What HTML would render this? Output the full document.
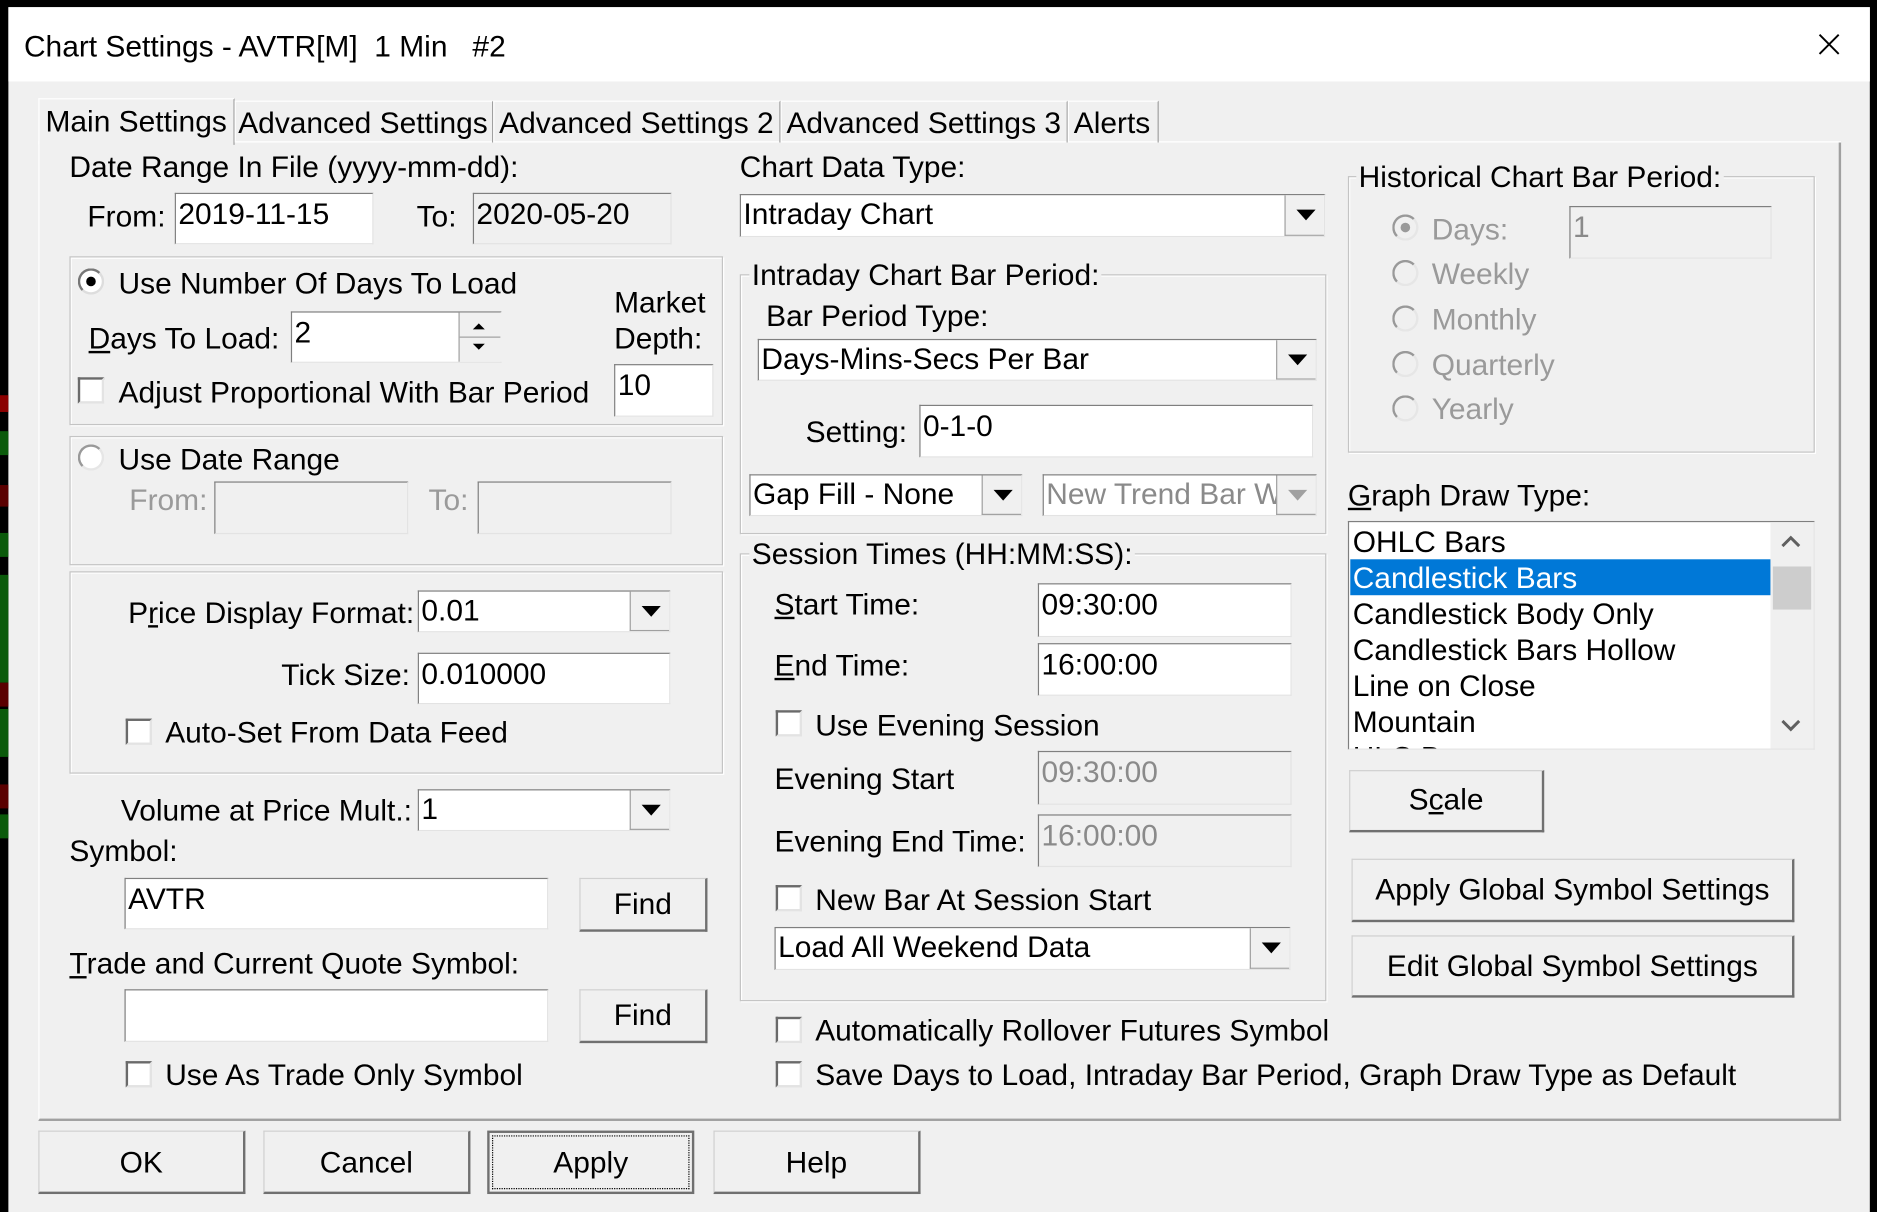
<!DOCTYPE html>
<html><head><meta charset="utf-8"><style>
html,body{margin:0;padding:0;background:#000;overflow:hidden;width:1877px;height:1212px}
#r{position:absolute;left:0;top:0;width:1568px;height:1012px;transform-origin:0 0;transform:scale(1.19707,1.19763);background:#000;font-family:"Liberation Sans",sans-serif;font-size:25px;color:#000}
#win{position:absolute;left:7px;top:6px;width:1555px;height:1006px;background:#f0f0f0}
#tb{position:absolute;left:7px;top:6px;width:1555px;height:62px;background:#fff}
.a{position:absolute;white-space:nowrap;line-height:30px;height:30px;margin-top:1px}
.g{color:#9a9a9a}
.in{position:absolute;background:#fff;box-sizing:border-box;border:1px solid;border-color:#7f7f7f #e3e3e3 #e3e3e3 #7f7f7f;padding-left:2px;line-height:34px;white-space:nowrap;overflow:hidden}
.dis{background:#f0f0f0;color:#8a8a8a}
.cb{position:absolute;background:#fff;box-sizing:border-box;border:1px solid;border-color:#7f7f7f #e3e3e3 #e3e3e3 #7f7f7f;padding-left:2px;line-height:33px;white-space:nowrap;overflow:hidden}
.cb .bt{position:absolute;right:0;top:0;bottom:0;width:33px;background:#f0f0f0;border-left:1px solid #a0a0a0;border-bottom:1px solid #a0a0a0;box-sizing:border-box}
.cb .bt:after{content:"";position:absolute;left:9px;top:12px;border-left:8px solid transparent;border-right:8px solid transparent;border-top:9px solid #000}
.cb.dis .bt:after{border-top-color:#a0a0a0}
.grp{position:absolute;box-sizing:border-box;border:1px solid #c4c4c4;box-shadow:1px 1px 0 #fff inset,1px 1px 0 #fff}
.gl{position:absolute;background:#f0f0f0;padding:0 2px;line-height:30px;height:30px;white-space:nowrap;margin-top:1px}
.chk{position:absolute;width:22px;height:22px;box-sizing:border-box;background:#fff;border:2px solid;border-color:#6a6a6a #e3e3e3 #e3e3e3 #6a6a6a}
.rad{position:absolute;width:22px;height:22px;border-radius:50%;box-sizing:border-box;background:#fff;border:2px solid;border-color:#777 #ddd #ddd #777}
.rad.on:after{content:"";position:absolute;left:5px;top:5px;width:8px;height:8px;border-radius:50%;background:#000}
.rad.gon:after{content:"";position:absolute;left:5px;top:5px;width:8px;height:8px;border-radius:50%;background:#9a9a9a}
.rad.gr{background:#f0f0f0;border-color:#999 #e6e6e6 #e6e6e6 #999}
.btn{position:absolute;box-sizing:border-box;background:#f0f0f0;border:1px solid #d0d0d0;border-right:2px solid #707070;border-bottom:2px solid #707070;text-align:center;white-space:nowrap}
u{text-decoration:underline}
</style></head><body><div id="r">
<div id="win"></div>
<div id="tb"></div>
<div style="position:absolute;left:0;top:330px;width:7px;height:14px;background:#8b0000"></div>
<div style="position:absolute;left:0;top:360px;width:7px;height:20px;background:#0a5a0a"></div>
<div style="position:absolute;left:0;top:405px;width:7px;height:18px;background:#5a0000"></div>
<div style="position:absolute;left:0;top:445px;width:7px;height:20px;background:#0a5a0a"></div>
<div style="position:absolute;left:0;top:480px;width:7px;height:90px;background:#0a5a0a"></div>
<div style="position:absolute;left:0;top:570px;width:7px;height:20px;background:#5a0000"></div>
<div style="position:absolute;left:0;top:592px;width:7px;height:40px;background:#0a5a0a"></div>
<div style="position:absolute;left:0;top:655px;width:7px;height:20px;background:#5a0000"></div>
<div style="position:absolute;left:0;top:680px;width:7px;height:20px;background:#0a5a0a"></div>
<div class="a" style="left:20px;top:23px">Chart Settings - AVTR[M]&nbsp; 1 Min&nbsp;&nbsp; #2</div>
<svg style="position:absolute;left:1519px;top:28px" width="18" height="18"><path d="M1 1L17 17M17 1L1 17" stroke="#000" stroke-width="1.6"/></svg>

<div style="position:absolute;left:32px;top:118px;width:1506px;height:818px;box-sizing:border-box;border:1px solid #a0a0a0;border-top-color:#fff;border-left-color:#fff;border-right:2px solid #a0a0a0;border-bottom:2px solid #a0a0a0"></div>
<div style="position:absolute;left:32px;top:118px;width:1506px;height:1px;background:#fff"></div>
<div style="position:absolute;left:32px;top:82px;width:162px;height:38px;background:#f0f0f0;border-left:1px solid #fff;border-top:1px solid #fff;border-right:1px solid #a0a0a0"></div>
<div class="a" style="left:38px;top:86px">Main Settings</div>
<div style="position:absolute;left:196px;top:84px;width:214px;height:34px;border-left:1px solid #fff;border-top:1px solid #fff;border-right:1px solid #a0a0a0"></div>
<div class="a" style="left:199px;top:87px">Advanced Settings</div>
<div style="position:absolute;left:412px;top:84px;width:238px;height:34px;border-left:1px solid #fff;border-top:1px solid #fff;border-right:1px solid #a0a0a0"></div>
<div class="a" style="left:417px;top:87px">Advanced Settings 2</div>
<div style="position:absolute;left:652px;top:84px;width:238px;height:34px;border-left:1px solid #fff;border-top:1px solid #fff;border-right:1px solid #a0a0a0"></div>
<div class="a" style="left:657px;top:87px">Advanced Settings 3</div>
<div style="position:absolute;left:892px;top:84px;width:74px;height:34px;border-left:1px solid #fff;border-top:1px solid #fff;border-right:1px solid #a0a0a0"></div>
<div class="a" style="left:897px;top:87px">Alerts</div>

<div class="a" style="left:58px;top:124px">Date Range In File (yyyy-mm-dd):</div>
<div class="a" style="left:73px;top:165px">From:</div>
<div class="in" style="left:146px;top:161px;width:166px;height:43px">2019-11-15</div>
<div class="a" style="left:348px;top:165px">To:</div>
<div class="in dis" style="left:395px;top:161px;width:166px;height:43px;color:#000">2020-05-20</div>

<div class="grp" style="left:58px;top:214px;width:546px;height:141px"></div>
<div class="rad on" style="left:65px;top:224px"></div>
<div class="a" style="left:99px;top:221px">Use Number Of Days To Load</div>
<div class="a" style="left:74px;top:267px"><u>D</u>ays To Load:</div>
<div class="in" style="left:243px;top:260px;width:176px;height:43px">2</div>
<div style="position:absolute;left:383px;top:261px;width:35px;height:41px;background:#f0f0f0;border-left:1px solid #a0a0a0"></div>
<div style="position:absolute;left:384px;top:281px;width:34px;height:1px;background:#a0a0a0"></div>
<svg style="position:absolute;left:393px;top:266px" width="14" height="30"><path d="M2 9L7 4L12 9Z M2 21L7 26L12 21Z" fill="#000"/></svg>
<div class="a" style="left:513px;top:237px">Market</div>
<div class="a" style="left:513px;top:267px">Depth:</div>
<div class="in" style="left:513px;top:304px;width:83px;height:44px">10</div>
<div class="chk" style="left:65px;top:315px"></div>
<div class="a" style="left:99px;top:312px">Adjust Proportional With Bar Period</div>

<div class="grp" style="left:58px;top:364px;width:546px;height:108px"></div>
<div class="rad gr" style="left:65px;top:371px;background:#fff"></div>
<div class="a" style="left:99px;top:368px">Use Date Range</div>
<div class="a g" style="left:108px;top:402px">From:</div>
<div class="in dis" style="left:179px;top:402px;width:162px;height:44px"></div>
<div class="a g" style="left:358px;top:402px">To:</div>
<div class="in dis" style="left:399px;top:402px;width:162px;height:44px"></div>

<div class="grp" style="left:58px;top:477px;width:546px;height:169px"></div>
<div class="a" style="left:107px;top:496px">P<u>r</u>ice Display Format:</div>
<div class="cb" style="left:349px;top:493px;width:211px;height:35px">0.01<div class="bt"></div></div>
<div class="a" style="left:235px;top:548px">Tick Size:</div>
<div class="in" style="left:349px;top:545px;width:211px;height:43px">0.010000</div>
<div class="chk" style="left:105px;top:600px"></div>
<div class="a" style="left:138px;top:596px">Auto-Set From Data Feed</div>

<div class="a" style="left:101px;top:661px">Volume at Price Mult.:</div>
<div class="cb" style="left:349px;top:659px;width:211px;height:35px">1<div class="bt"></div></div>
<div class="a" style="left:58px;top:695px">Symbol:</div>
<div class="in" style="left:104px;top:733px;width:354px;height:43px">AVTR</div>
<div class="btn" style="left:484px;top:733px;width:107px;height:45px;line-height:42px">Find</div>
<div class="a" style="left:58px;top:789px"><u>T</u>rade and Current Quote Symbol:</div>
<div class="in" style="left:104px;top:826px;width:354px;height:44px"></div>
<div class="btn" style="left:484px;top:826px;width:107px;height:45px;line-height:42px">Find</div>
<div class="chk" style="left:105px;top:886px"></div>
<div class="a" style="left:138px;top:882px">Use As Trade Only Symbol</div>

<div class="a" style="left:618px;top:124px">Chart Data Type:</div>
<div class="cb" style="left:618px;top:162px;width:489px;height:36px">Intraday Chart<div class="bt"></div></div>
<div class="grp" style="left:618px;top:229px;width:490px;height:217px"></div>
<div class="gl" style="left:626px;top:214px">Intraday Chart Bar Period:</div>
<div class="a" style="left:640px;top:248px">Bar Period Type:</div>
<div class="cb" style="left:633px;top:283px;width:467px;height:35px">Days-Mins-Secs Per Bar<div class="bt"></div></div>
<div class="a" style="left:673px;top:345px">Setting:</div>
<div class="in" style="left:768px;top:338px;width:329px;height:44px">0-1-0</div>
<div class="cb" style="left:626px;top:396px;width:228px;height:35px">Gap Fill - None<div class="bt"></div></div>
<div class="cb dis" style="left:871px;top:396px;width:229px;height:35px;color:#8a8a8a">New Trend Bar W<div class="bt"></div></div>

<div class="grp" style="left:618px;top:462px;width:490px;height:374px"></div>
<div class="gl" style="left:626px;top:447px">Session Times (HH:MM:SS):</div>
<div class="a" style="left:647px;top:489px"><u>S</u>tart Time:</div>
<div class="in" style="left:867px;top:487px;width:212px;height:45px">09:30:00</div>
<div class="a" style="left:647px;top:540px"><u>E</u>nd Time:</div>
<div class="in" style="left:867px;top:537px;width:212px;height:44px">16:00:00</div>
<div class="chk" style="left:648px;top:593px"></div>
<div class="a" style="left:681px;top:590px">Use Evening Session</div>
<div class="a" style="left:647px;top:635px">Evening Start</div>
<div class="in dis" style="left:867px;top:627px;width:212px;height:45px">09:30:00</div>
<div class="a" style="left:647px;top:687px">Evening End Time:</div>
<div class="in dis" style="left:867px;top:680px;width:212px;height:44px">16:00:00</div>
<div class="chk" style="left:648px;top:739px"></div>
<div class="a" style="left:681px;top:736px">New Bar At Session Start</div>
<div class="cb" style="left:647px;top:774px;width:431px;height:36px">Load All Weekend Data<div class="bt"></div></div>

<div class="chk" style="left:648px;top:849px"></div>
<div class="a" style="left:681px;top:845px">Automatically Rollover Futures Symbol</div>
<div class="chk" style="left:648px;top:886px"></div>
<div class="a" style="left:681px;top:882px">Save Days to Load, Intraday Bar Period, Graph Draw Type as Default</div>

<div class="grp" style="left:1126px;top:147px;width:390px;height:231px"></div>
<div class="gl" style="left:1133px;top:132px">Historical Chart Bar Period:</div>
<div class="rad gr gon" style="left:1163px;top:179px"></div>
<div class="a g" style="left:1196px;top:176px">Days:</div>
<div class="in dis" style="left:1311px;top:172px;width:169px;height:44px">1</div>
<div class="rad gr" style="left:1163px;top:217px"></div>
<div class="a g" style="left:1196px;top:213px">Weekly</div>
<div class="rad gr" style="left:1163px;top:255px"></div>
<div class="a g" style="left:1196px;top:251px">Monthly</div>
<div class="rad gr" style="left:1163px;top:293px"></div>
<div class="a g" style="left:1196px;top:289px">Quarterly</div>
<div class="rad gr" style="left:1163px;top:330px"></div>
<div class="a g" style="left:1196px;top:326px">Yearly</div>

<div class="a" style="left:1126px;top:398px"><u>G</u>raph Draw Type:</div>
<div style="position:absolute;left:1126px;top:435px;width:390px;height:191px;box-sizing:border-box;background:#fff;border:1px solid;border-color:#7f7f7f #e3e3e3 #e3e3e3 #7f7f7f;overflow:hidden">
<div style="position:absolute;left:1px;top:31px;width:351px;height:30px;background:#0078d7"></div>
<div class="a" style="left:3px;top:1px">OHLC Bars</div>
<div class="a" style="left:3px;top:31px;color:#fff">Candlestick Bars</div>
<div class="a" style="left:3px;top:61px">Candlestick Body Only</div>
<div class="a" style="left:3px;top:91px">Candlestick Bars Hollow</div>
<div class="a" style="left:3px;top:121px">Line on Close</div>
<div class="a" style="left:3px;top:151px">Mountain</div>
<div class="a" style="left:3px;top:181px">HLC Bars</div>
<div style="position:absolute;left:352px;top:0;width:36px;height:190px;background:#f0f0f0"></div>
<div style="position:absolute;left:354px;top:37px;width:32px;height:36px;background:#cdcdcd"></div>
<svg style="position:absolute;left:360px;top:10px" width="18" height="14"><path d="M2 10L9 3L16 10" stroke="#606060" stroke-width="2.5" fill="none"/></svg>
<svg style="position:absolute;left:360px;top:163px" width="18" height="14"><path d="M2 3L9 10L16 3" stroke="#606060" stroke-width="2.5" fill="none"/></svg>
</div>
<div class="btn" style="left:1127px;top:643px;width:163px;height:52px;line-height:49px">S<u>c</u>ale</div>
<div class="btn" style="left:1129px;top:717px;width:370px;height:53px;line-height:50px">Apply Global Symbol Settings</div>
<div class="btn" style="left:1129px;top:781px;width:370px;height:52px;line-height:50px">Edit Global Symbol Settings</div>

<div class="btn" style="left:32px;top:944px;width:173px;height:53px;line-height:52px">OK</div>
<div class="btn" style="left:220px;top:944px;width:173px;height:53px;line-height:52px">Cancel</div>
<div class="btn" style="left:407px;top:944px;width:173px;height:53px;line-height:50px;border:2px solid #707070"><div style="position:absolute;left:2px;top:2px;right:2px;bottom:2px;border:1px dotted #000"></div>Apply</div>
<div class="btn" style="left:596px;top:944px;width:173px;height:53px;line-height:52px">Help</div>
</div></body></html>
